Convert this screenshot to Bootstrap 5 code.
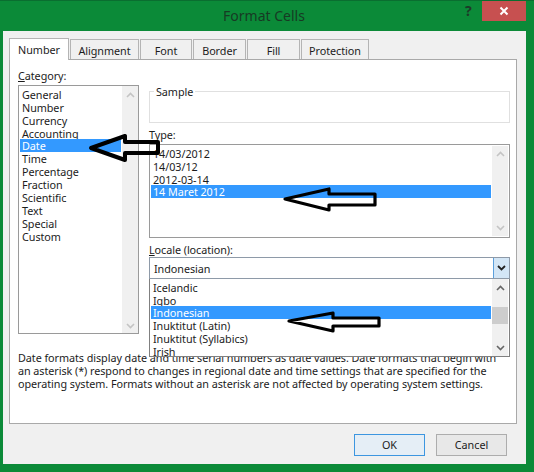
<!DOCTYPE html>
<html lang="en"><head><meta charset="utf-8"><title>Format Cells</title>
<link href="https://cdn.jsdelivr.net/npm/bootstrap@5.3.0/dist/css/bootstrap.min.css" rel="stylesheet">
<style>
html,body{margin:0;background:#0b8a38;}
body{width:534px;height:472px;overflow:hidden;font:10.8px/13px "Noto Sans",sans-serif;letter-spacing:-.06px;color:#1c1c1c;position:relative;}
.xl-top{height:31px;position:relative;border-top:1px solid #0a6e30;}
.xl-title{font-size:14px;line-height:18px;color:#173a24;text-align:center;padding-top:6px;padding-right:6px;letter-spacing:0;}
.xl-help{position:absolute;left:465px;top:2px;font-weight:700;font-size:14px;line-height:16px;color:#1d3a28;}
.xl-close{position:absolute;left:482px;top:0;width:44px;height:20px;background:#c75050;display:flex;align-items:center;justify-content:center;}
.xl-client{margin-left:3px;width:523px;height:433px;background:#f0f0f0;padding:7px 9px 0 6px;}
.xl-tabs{border:0;gap:1px;height:21px;align-items:flex-end;position:relative;z-index:1;}
.xl-tabs .nav-link{font-size:10.8px;line-height:13px;color:#1c1c1c;background:#f0f0f0;border:1px solid #b4b4b4;border-bottom:0;border-radius:0;padding:4px 0 1px;text-align:center;height:20px;margin:0;}
.xl-tabs .nav-link.active{height:22px;margin-bottom:-1px;background:#fff;color:#1c1c1c;border-color:#b4b4b4;padding-top:4px;position:relative;}
.xl-w1{width:60px}.xl-w2{width:69px}.xl-w3{width:52px}.xl-w4{width:53px}.xl-w5{width:53px}.xl-w6{width:68px}
.xl-panel{width:508px;height:365px;background:#fff;border:1px solid #a9a9a9;padding:9px 6px 0 8px;}
.xl-cols{display:flex;gap:10px;}
.xl-left{width:121px;flex:none;}
.xl-right{flex:1;min-width:0;position:relative;padding-top:16px;}
.xl-label{line-height:13px;margin-bottom:2px;}
.xl-label u{text-underline-offset:1px;}
.xl-catlabel{margin-bottom:3px;}
.xl-typelabel{margin-bottom:3px;}
.xl-loclabel{margin-bottom:1px;}
.xl-box{display:flex;background:#fff;border:1px solid #9a9a9a;padding:1px;}
.xl-catbox{height:249px;padding:2px 0 0 1px;}
.xl-typebox{height:94px;margin-bottom:5px;padding-top:2px;}
.xl-typebox .xl-bar{margin-top:-1px;}
.xl-box .list-group{flex:1;min-width:0;border-radius:0;--bs-list-group-bg:transparent;}
.xl-box .list-group-item{padding:0 2px;font-size:10.8px;line-height:13px;height:13px;border:0;background:transparent;color:#1c1c1c;white-space:nowrap;}
.xl-box .list-group-item.active{background:#3399ff;color:#fff;}
.xl-bar{width:16px;flex:none;margin-left:1px;background:#f0f0f0;display:flex;flex-direction:column;justify-content:space-between;align-items:center;padding:5px 0;}
.xl-catbox .xl-bar{margin-top:-2px;margin-bottom:0;padding:6px 0 4px;}
.xl-sample{height:38px;border:1px solid #e0e0e0;margin:0 0 5px;padding:0;}
.xl-sample legend{float:none;width:auto;font-size:10.8px;line-height:13px;margin:0 0 0 4px;padding:0 2px;}
.xl-combo{height:22px;display:flex;border:1px solid #8e9aa8;background:#fff;padding-left:4px;align-items:center;}
.xl-combo span{flex:1;}
.xl-cbtn{width:16px;height:20px;background:#d3e6f6;border-left:1px solid #5b9fdc;display:flex;align-items:center;justify-content:center;}
.xl-locale{position:relative;}
.xl-drop{position:absolute;left:0;right:0;top:100%;height:78px;z-index:3;border:1px solid #808080;border-top:0;padding:2px 1px 0 1px;margin-top:0;}
.xl-drop .xl-bar{padding:6px 0 5px;margin-top:-2px;position:relative;}
.xl-thumb{position:absolute;left:0;right:0;top:28px;height:17px;background:#cdcdcd;}
.xl-desc{margin:17px 0 0;line-height:13px;white-space:nowrap;}
.xl-foot{height:40px;padding-top:10px;padding-right:11px;display:flex;justify-content:flex-end;gap:11px;width:509px;}
.xl-foot .btn{width:71px;height:22px;padding:0;font-size:10.8px;line-height:20px;border-radius:0;color:#1c1c1c;background:#e8e8e8;border:1px solid #adadad;}
.xl-foot .btn-primary{border-color:#3d96e0;background:#e5eef6;}
.xl-ink{position:absolute;left:0;top:0;width:534px;height:472px;z-index:5;pointer-events:none;}
</style></head>
<body>
<div class="xl-top">
  <div class="xl-title">Format Cells</div>
  <div class="xl-help">?</div>
  <div class="xl-close"><svg width="10" height="10" viewBox="0 0 10 10"><path d="M1.5 1.5l7 7M8.5 1.5l-7 7" stroke="#fff" stroke-width="2" fill="none"/></svg></div>
</div>
<div class="xl-client">
  <ul class="nav nav-tabs xl-tabs">
    <li class="nav-item"><a class="nav-link active xl-w1" href="#">Number</a></li>
    <li class="nav-item"><a class="nav-link xl-w2" href="#">Alignment</a></li>
    <li class="nav-item"><a class="nav-link xl-w3" href="#">Font</a></li>
    <li class="nav-item"><a class="nav-link xl-w4" href="#">Border</a></li>
    <li class="nav-item"><a class="nav-link xl-w5" href="#">Fill</a></li>
    <li class="nav-item"><a class="nav-link xl-w6" href="#">Protection</a></li>
  </ul>
  <div class="xl-panel">
    <div class="xl-cols">
      <div class="xl-left">
        <div class="xl-label xl-catlabel"><u>C</u>ategory:</div>
        <div class="xl-box xl-catbox">
          <div class="list-group">
            <div class="list-group-item">General</div>
            <div class="list-group-item">Number</div>
            <div class="list-group-item">Currency</div>
            <div class="list-group-item">Accounting</div>
            <div class="list-group-item active">Date</div>
            <div class="list-group-item">Time</div>
            <div class="list-group-item">Percentage</div>
            <div class="list-group-item">Fraction</div>
            <div class="list-group-item">Scientific</div>
            <div class="list-group-item">Text</div>
            <div class="list-group-item">Special</div>
            <div class="list-group-item">Custom</div>
          </div>
          <div class="xl-bar">
            <svg width="9" height="6" viewBox="0 0 9 6"><path d="M1 5l3.5-3.5L8 5" stroke="#c4c4c4" stroke-width="1.6" fill="none"/></svg>
            <svg width="9" height="6" viewBox="0 0 9 6"><path d="M1 1l3.5 3.5L8 1" stroke="#c4c4c4" stroke-width="1.6" fill="none"/></svg>
          </div>
        </div>
      </div>
      <div class="xl-right">
        <fieldset class="xl-sample"><legend>Sample</legend></fieldset>
        <div class="xl-label xl-typelabel"><u>T</u>ype:</div>
        <div class="xl-box xl-typebox">
          <div class="list-group">
            <div class="list-group-item">14/03/2012</div>
            <div class="list-group-item">14/03/12</div>
            <div class="list-group-item">2012-03-14</div>
            <div class="list-group-item active">14 Maret 2012</div>
          </div>
          <div class="xl-bar">
            <svg width="9" height="6" viewBox="0 0 9 6"><path d="M1 5l3.5-3.5L8 5" stroke="#c4c4c4" stroke-width="1.6" fill="none"/></svg>
            <svg width="9" height="6" viewBox="0 0 9 6"><path d="M1 1l3.5 3.5L8 1" stroke="#c4c4c4" stroke-width="1.6" fill="none"/></svg>
          </div>
        </div>
        <div class="xl-label xl-loclabel"><u>L</u>ocale (location):</div>
        <div class="xl-locale">
          <div class="xl-combo"><span>Indonesian</span>
            <div class="xl-cbtn"><svg width="9" height="6" viewBox="0 0 9 6"><path d="M1 1l3.5 3.5L8 1" stroke="#222" stroke-width="1.8" fill="none"/></svg></div>
          </div>
          <div class="xl-box xl-drop">
            <div class="list-group">
              <div class="list-group-item">Icelandic</div>
              <div class="list-group-item">Igbo</div>
              <div class="list-group-item active">Indonesian</div>
              <div class="list-group-item">Inuktitut (Latin)</div>
              <div class="list-group-item">Inuktitut (Syllabics)</div>
              <div class="list-group-item">Irish</div>
            </div>
            <div class="xl-bar">
              <svg width="9" height="6" viewBox="0 0 9 6"><path d="M1 5l3.5-3.5L8 5" stroke="#666" stroke-width="1.6" fill="none"/></svg>
              <div class="xl-thumb"></div>
              <svg width="9" height="6" viewBox="0 0 9 6"><path d="M1 1l3.5 3.5L8 1" stroke="#666" stroke-width="1.6" fill="none"/></svg>
            </div>
          </div>
        </div>
      </div>
    </div>
    <p class="xl-desc">Date formats display date and time serial numbers as date values.  Date formats that begin with<br>an asterisk (*) respond to changes in regional date and time settings that are specified for the<br>operating system. Formats without an asterisk are not affected by operating system settings.</p>
  </div>
  <div class="xl-foot">
    <button class="btn btn-primary" type="button">OK</button>
    <button class="btn btn-secondary" type="button">Cancel</button>
  </div>
</div>
<svg class="xl-ink" viewBox="0 0 534 472" fill="none" stroke="#000" stroke-linejoin="round">
  <path stroke-width="4" d="M91 148L125 136V142H158V153H125V160Z"/>
  <path stroke-width="3.2" d="M285 199L329 189V194H375V205H329V210Z"/>
  <path stroke-width="3.2" d="M289 321L333 313V318H379V326H333V331Z"/>
</svg>
</body></html>
